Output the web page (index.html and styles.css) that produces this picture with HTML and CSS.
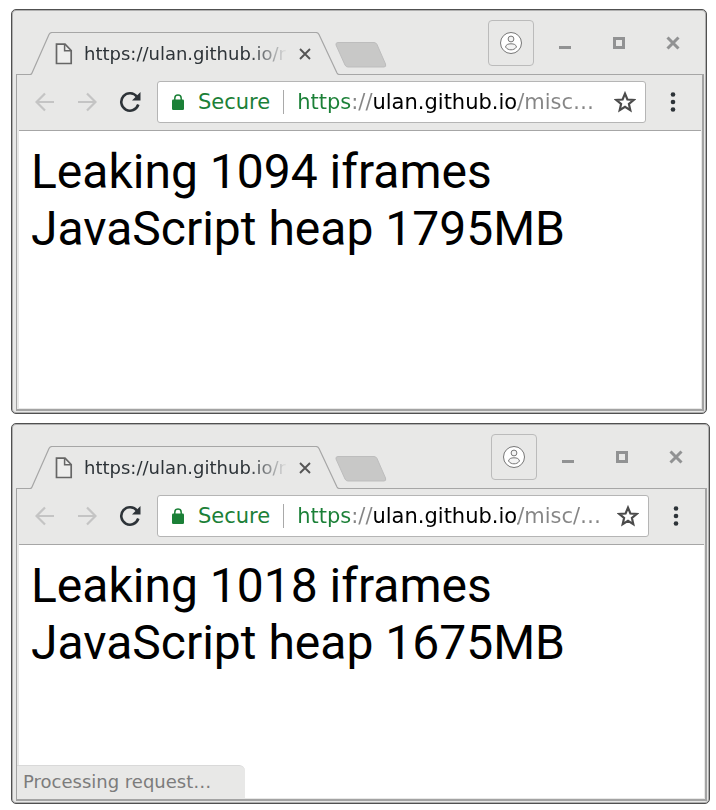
FILE: index.html
```
<!DOCTYPE html>
<html lang="en">
<head>
<meta charset="utf-8">
<title>Leaking iframes</title>
<link rel="stylesheet" href="styles.css">
</head>
<body>
<svg width="0" height="0" class="defs" aria-hidden="true">
  <symbol id="doc" viewBox="0 0 18 22"><path d="M1.5 1.2H10L16.2 7.5V20.5H1.5Z" fill="#eeeeed" stroke="#666" stroke-width="1.7"/><path d="M9.6 1.5V7.8H16" fill="none" stroke="#666" stroke-width="1.5"/></symbol>
  <symbol id="cross" viewBox="0 0 12 12"><path d="M1 1L11 11M11 1L1 11" stroke="#555" stroke-width="1.9" fill="none"/></symbol>
  <symbol id="user" viewBox="0 0 24 24"><circle cx="12" cy="12" r="10.5" fill="#fff" stroke="#777"/><circle cx="12" cy="8" r="2.9" fill="#f4f4f4" stroke="#777"/><path d="M6.5 16C7 13.6 9 12.8 12 12.8S17 13.6 17.5 16C16 18.2 14 18.8 12 18.8S8 18.2 6.5 16Z" fill="#f4f4f4" stroke="#777"/></symbol>
  <symbol id="min" viewBox="0 0 14 14"><path d="M1 10H13V13H1Z" fill="#919293"/></symbol>
  <symbol id="max" viewBox="0 0 14 14"><path d="M2.5 2.5H11.5V11.5H2.5Z" fill="none" stroke="#919293" stroke-width="3"/></symbol>
  <symbol id="close" viewBox="0 0 14 14"><path d="M1.5 1.5L12.5 12.5M12.5 1.5L1.5 12.5" stroke="#919293" stroke-width="3" fill="none"/></symbol>
  <symbol id="back" viewBox="0 0 20 20"><path d="M19 10H2M10 1.4L1.5 10L10 18.6" fill="none" stroke="#c4c4c4" stroke-width="2.2"/></symbol>
  <symbol id="forward" viewBox="0 0 20 20"><path d="M1 10H18M10 1.4L18.5 10L10 18.6" fill="none" stroke="#c4c4c4" stroke-width="2.2"/></symbol>
  <symbol id="reload" viewBox="0 0 22 22"><path d="M18 5.8A8.7 8.7 0 1 0 19.3 13.5" fill="none" stroke="#2d3338" stroke-width="2.6"/><path d="M21.5 1V9.5H13Z" fill="#2d3338"/></symbol>
  <symbol id="lock" viewBox="0 0 12 16"><path d="M2.8 7V4.2A3.2 3.2 0 0 1 9.2 4.2V7" fill="none" stroke="#1b8037" stroke-width="1.5"/><rect y="5.5" width="12" height="10.5" rx="1.2" fill="#1b8037"/></symbol>
  <symbol id="star" viewBox="0 0 22 22"><path d="M11 2.7L13.4 8.5L19.6 9L14.9 13L16.3 19.1L11 15.8L5.7 19.1L7.1 13L2.4 9L8.6 8.5Z" fill="none" stroke="#4b4b4b" stroke-width="2.2"/></symbol>
  <symbol id="more" viewBox="0 0 6 20"><circle cx="3" cy="2.5" r="2.3" fill="#2d3338"/><circle cx="3" cy="10" r="2.3" fill="#2d3338"/><circle cx="3" cy="17.5" r="2.3" fill="#2d3338"/></symbol>
  <symbol id="tabshape" viewBox="0 0 310 43"><path d="M0 42.5C1 42.5 1.6 42 2 41L19 2.5Q20 .5 22 .5H286Q288 .5 289 2.5L307 41C307.5 42 308 42.5 310 42.5V43H0Z" fill="#e8e8e7"/><path d="M0 42.5C1 42.5 1.6 42 2 41L19 2.5Q20 .5 22 .5H286Q288 .5 289 2.5L307 41C307.5 42 308 42.5 310 42.5" fill="none" stroke="#a6a6a6" stroke-width="1.2"/></symbol>
  <symbol id="newtab" viewBox="0 0 52 26"><path d="M3 .5H39Q41 .5 42 2.5L50.5 22Q51.5 25 49 25H13Q11 25 10 23L1 3Q.5 .5 3 .5Z" fill="#c8c8c7" stroke="#bdbdbd"/></symbol>
</svg>
<main class="desk">
  <section class="window window-first">
    <header class="strip">
      <div class="tab">
        <svg class="tab-shape"><use href="#tabshape"/></svg>
        <svg class="doc"><use href="#doc"/></svg>
        <span class="tab-title">https://ulan.github.io/r</span>
        <button class="tab-close" aria-label="Close tab"><svg class="i12"><use href="#cross"/></svg></button>
      </div>
      <button class="new-tab" aria-label="New tab"><svg><use href="#newtab"/></svg></button>
      <div class="controls">
        <button class="user" aria-label="Profile"><svg class="i24"><use href="#user"/></svg></button>
        <button aria-label="Minimize"><svg class="i14"><use href="#min"/></svg></button>
        <button aria-label="Maximize"><svg class="i14"><use href="#max"/></svg></button>
        <button aria-label="Close"><svg class="i14"><use href="#close"/></svg></button>
      </div>
    </header>
    <div class="frame">
      <nav class="toolbar">
        <button aria-label="Back"><svg class="i20"><use href="#back"/></svg></button>
        <button aria-label="Forward"><svg class="i20"><use href="#forward"/></svg></button>
        <button aria-label="Reload"><svg class="i22"><use href="#reload"/></svg></button>
        <div class="omnibox">
          <svg class="lock"><use href="#lock"/></svg>
          <label class="secure" for="url-1">Secure</label>
          <input class="url" id="url-1" type="text" value="https://ulan.github.io/misc…">
          <button aria-label="Bookmark"><svg class="i22"><use href="#star"/></svg></button>
        </div>
        <button class="menu" aria-label="Menu"><svg class="more"><use href="#more"/></svg></button>
      </nav>
      <div class="page">
        <p>Leaking 1094 iframes</p>
        <p>JavaScript heap 1795MB</p>
      </div>
    </div>
  </section>
  <section class="window window-second">
    <header class="strip">
      <div class="tab">
        <svg class="tab-shape"><use href="#tabshape"/></svg>
        <svg class="doc"><use href="#doc"/></svg>
        <span class="tab-title">https://ulan.github.io/r</span>
        <button class="tab-close" aria-label="Close tab"><svg class="i12"><use href="#cross"/></svg></button>
      </div>
      <button class="new-tab" aria-label="New tab"><svg><use href="#newtab"/></svg></button>
      <div class="controls">
        <button class="user" aria-label="Profile"><svg class="i24"><use href="#user"/></svg></button>
        <button aria-label="Minimize"><svg class="i14"><use href="#min"/></svg></button>
        <button aria-label="Maximize"><svg class="i14"><use href="#max"/></svg></button>
        <button aria-label="Close"><svg class="i14"><use href="#close"/></svg></button>
      </div>
    </header>
    <div class="frame">
      <nav class="toolbar">
        <button aria-label="Back"><svg class="i20"><use href="#back"/></svg></button>
        <button aria-label="Forward"><svg class="i20"><use href="#forward"/></svg></button>
        <button aria-label="Reload"><svg class="i22"><use href="#reload"/></svg></button>
        <div class="omnibox">
          <svg class="lock"><use href="#lock"/></svg>
          <label class="secure" for="url-2">Secure</label>
          <input class="url" id="url-2" type="text" value="https://ulan.github.io/misc/…">
          <button aria-label="Bookmark"><svg class="i22"><use href="#star"/></svg></button>
        </div>
        <button class="menu" aria-label="Menu"><svg class="more"><use href="#more"/></svg></button>
      </nav>
      <div class="page">
        <p>Leaking 1018 iframes</p>
        <p>JavaScript heap 1675MB</p>
        <div class="status" role="status">Processing request…</div>
      </div>
    </div>
  </section>
</main>
</body>
</html>
```
FILE: styles.css
```
* { box-sizing: border-box; }
body {
  margin: 0;
  background: #fff;
  font-family: "DejaVu Sans", sans-serif;
}
.defs { position: absolute; }
svg { display: block; }
button {
  display: flex;
  align-items: center;
  justify-content: center;
  padding: 0;
  border: 0;
  background: none;
}
.i12 { width: 12px; height: 12px; }
.i14 { width: 14px; height: 14px; }
.i20 { width: 20px; height: 20px; }
.i22 { width: 22px; height: 22px; }
.i24 { width: 24px; height: 24px; }

.desk {
  display: flex;
  flex-direction: column;
  gap: 9px;
  padding: 9px 6px 6px 11px;
}
.window {
  display: flex;
  flex-direction: column;
  padding: 1px 2px 2px 4px;
  border: 1px solid #505050;
  border-radius: 5px;
  background: #e8e8e7;
  box-shadow: inset 0 0 0 1px #b0b0b0;
}
.window-first { margin-right: 3px; }

.strip {
  display: flex;
  align-items: flex-end;
  height: 64px;
  border-bottom: 1px solid #a6a6a6;
}
.tab {
  position: relative;
  display: flex;
  align-items: center;
  width: 310px;
  height: 43px;
  margin: 0 0 -1px 14px;
  padding-left: 25px;
}
.tab-shape {
  position: absolute;
  inset: 0;
  width: 100%;
  height: 100%;
}
.doc, .tab-title, .tab-close { position: relative; }
.doc { width: 18px; height: 22px; }
.tab-title {
  width: 204px;
  margin-left: 11px;
  color: #2d3338;
  font-size: 18px;
  white-space: nowrap;
  -webkit-mask-image: linear-gradient(90deg, #000 165px, transparent 204px);
  mask-image: linear-gradient(90deg, #000 165px, transparent 204px);
}
.tab-close { margin-left: 11px; }
.new-tab { margin: 0 0 6px -5px; }
.new-tab svg { width: 52px; height: 26px; }
.controls {
  display: flex;
  align-items: center;
  gap: 40px;
  margin: 0 24px 8px auto;
}
.user {
  width: 46px;
  height: 46px;
  margin-right: -16px;
  border: 1px solid #bbb;
  border-radius: 4px;
}

.frame {
  border: solid #a3a3a3;
  border-width: 0 2px 2px 1px;
  padding: 0 1px 1px 2px;
}
.toolbar {
  display: flex;
  align-items: center;
  gap: 22px;
  height: 56px;
  padding: 0 25px 2px 16px;
  border-bottom: 1px solid #a6a6a6;
}
.omnibox {
  display: flex;
  flex: 1;
  align-items: center;
  min-width: 0;
  height: 42px;
  margin: 0 2px 0 -6px;
  padding: 0 9px 0 14px;
  border: 1px solid #b5b5b5;
  border-radius: 3px;
  background: #fff;
}
.lock { width: 12px; height: 16px; }
.secure {
  margin-left: 14px;
  padding-right: 13px;
  border-right: 1px solid #a9a9a9;
  color: #1b8037;
  font-size: 21px;
  line-height: 24px;
}
.url {
  flex: 1;
  min-width: 0;
  margin: 0 8px 0 13px;
  padding: 0;
  border: 0;
  outline: 0;
  font: 21px/24px "DejaVu Sans", sans-serif;
  color: transparent;
  background: linear-gradient(90deg, #1b8037 55px, #858585 55px 76px, #000 76px 221px, #858585 221px);
  -webkit-background-clip: text;
  background-clip: text;
}
.more { width: 6px; height: 20px; }

.page {
  position: relative;
  min-height: 277px;
  padding: 12px;
  background: #fff;
  color: #000;
  font: 48px/57px Roboto, sans-serif;
}
.window-second .page { min-height: 253px; }
.page p { margin: 0; }
.status {
  position: absolute;
  bottom: 0;
  left: -2px;
  width: 228px;
  padding: 0 6px;
  border-top: 1px solid #d9d9d9;
  border-radius: 0 6px 0 0;
  background: #e8e8e7;
  color: #7c7c7c;
  font: 18px/32px "DejaVu Sans", sans-serif;
}
```
